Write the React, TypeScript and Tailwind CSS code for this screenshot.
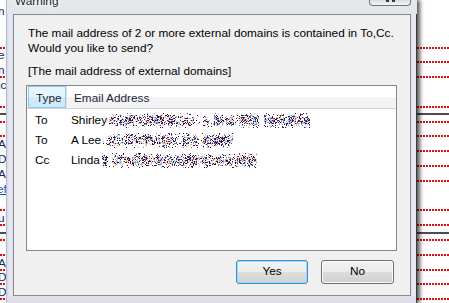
import React from "react";

function rng(seed: number) {
  let a = seed;
  return () => {
    a |= 0;
    a = (a + 0x6d2b79f5) | 0;
    let t = Math.imul(a ^ (a >>> 15), 1 | a);
    t = (t + Math.imul(t ^ (t >>> 7), 61 | t)) ^ t;
    return ((t ^ (t >>> 14)) >>> 0) / 4294967296;
  };
}

const COLORS = [
  "#4a1036",
  "#2a1a70",
  "#6a1a2a",
  "#1c1c3c",
  "#3d8fe0",
  "#7fcfff",
  "#ffa64d",
  "#f6c98a",
  "#b9a0d0",
  "#8bb8e8",
  "#5b2b6e",
  "#c9c9d9",
  "#3a1030",
];

function Noise({ w, seed }: { w: number; seed: number }) {
  const rects = React.useMemo(() => {
    const r = rng(seed);
    const out: { x: number; y: number; c: string }[] = [];
    const h = 15;
    let cf = 1;
    for (let x = 0; x < w; x++) {
      if (x % 5 === 0) cf = r() < 0.1 ? 0.2 : 0.7 + r() * 0.6;
      for (let y = 0; y < h; y++) {
        const rowF = y < 2 || y > 12 ? 0.14 : y < 4 || y > 10 ? 0.4 : 0.68;
        if (r() < rowF * cf * 0.85) {
          out.push({ x, y, c: COLORS[Math.floor(r() * COLORS.length)] });
        }
      }
    }
    return out;
  }, [w, seed]);
  return (
    <svg width={w} height={15} className="block shrink-0" shapeRendering="crispEdges">
      {rects.map((p, i) => (
        <rect key={i} x={p.x} y={p.y} width={1} height={1} fill={p.c} />
      ))}
    </svg>
  );
}

type BgRow = {
  h: number;
  text?: string;
  blue?: boolean;
  left?: boolean;
  right?: boolean;
  rule?: number;
};

const ROWS: BgRow[] = [
  { h: 19, text: "n" },
  { h: 15 },
  { h: 15, left: true, right: true },
  { h: 14, text: "e", right: true },
  { h: 15, text: "n", left: true, right: true },
  { h: 15, text: "ic" },
  { h: 15, left: true, right: true },
  { h: 15, rule: 5, left: true, right: true },
  { h: 14, left: true, right: true },
  { h: 15, text: "AD", right: true },
  { h: 15, text: "D", right: true },
  { h: 15, text: "AD", right: true },
  { h: 15, text: "ef", blue: true },
  { h: 14, left: true, right: true },
  { h: 15, text: "u", left: true, right: true },
  { h: 15, rule: 6, left: true, right: true },
  { h: 15, left: true, right: true },
  { h: 15, text: "AD", left: true, right: true },
  { h: 14, text: "D", left: true, right: true },
  { h: 15, text: "D", left: true, right: true },
  { h: 15 },
];

function Squiggle() {
  return (
    <div className="h-[2px] w-full bg-[repeating-linear-gradient(90deg,#e01010_0px,#e01010_2px,transparent_2px,transparent_3px)]" />
  );
}

function Backdrop() {
  return (
    <div className="flex flex-col">
      {ROWS.map((r, i) => (
        <div key={i} className="relative flex" style={{ height: r.h }}>
          {r.rule !== undefined && (
            <div className="absolute left-0 right-0 h-[2px] bg-[#4d4d4d]" style={{ top: r.rule }} />
          )}
          <div className="w-[20px] flex flex-col justify-end">
            {r.text && (
              <div
                className={
                  r.blue
                    ? "ml-[-3px] leading-[12px] text-[#1f4fbf] underline"
                    : "ml-[-2px] leading-[12px] text-[#1a2560]"
                }
              >
                {r.text}
              </div>
            )}
            <div className="h-[2px]">{r.left && <Squiggle />}</div>
          </div>
          <div className="flex-1" />
          <div className="w-[32px] flex flex-col justify-end">
            <div className="h-[2px]">{r.right && <Squiggle />}</div>
          </div>
        </div>
      ))}
    </div>
  );
}

function ListRow({ type, name, w, seed }: { type: string; name: string; w: number; seed: number }) {
  return (
    <div className="flex h-[20px] items-center leading-[20px] text-black">
      <span className="w-[38px] pl-[8px] shrink-0">{type}</span>
      <span className="pl-[6px] shrink-0">{name}</span>
      <span className="ml-[2px]">
        <Noise w={w} seed={seed} />
      </span>
    </div>
  );
}

export default function App() {
  return (
    <div className="relative w-[449px] h-[303px] overflow-hidden bg-white font-['Liberation_Sans',Arial,sans-serif] text-[11.8px]">
      <Backdrop />

      {/* dialog window */}
      <div className="absolute left-[6px] top-0 w-[411px] h-[303px] flex flex-col bg-[#e1e5eb] shadow-[3px_0_4px_rgba(0,0,0,0.65)]">
        {/* title bar */}
        <div className="h-[14px] flex items-start justify-between bg-[linear-gradient(180deg,#e6e8eb,#e2e5ea)] border-l border-[#b4bcc8]">
          <span className="ml-[8px] mt-[-4px] leading-none text-[#1e1e1e] [text-shadow:0_0_5px_#ffffff,0_0_3px_#ffffff]">
            Warning
          </span>
          <div className="mr-[6px] w-[42px] h-[6px] rounded-b-[4px] border border-t-0 border-[#6f7378] bg-[linear-gradient(180deg,#d9dbdf,#f4f5f7)] flex justify-center">
            <div className="w-[9px] h-[2px] flex justify-between">
              <div className="w-[3px] h-[2px] bg-[#3a3a3a]" />
              <div className="w-[3px] h-[2px] bg-[#3a3a3a]" />
            </div>
          </div>
        </div>

        {/* middle */}
        <div className="flex h-[282px]">
          <div className="w-[7px] border-l border-[#b4bcc8] bg-[linear-gradient(90deg,#d3d9e3,#e4ecf7_40%,#ece3ef_75%,#dcdfe8)]" />
          <div className="w-[398px] h-full border border-[#878c94] bg-[#f0f0f0] flex flex-col">
            <div className="pl-[14px] pt-[11px] leading-[15px] text-black">
              <p>The mail address of 2 or more external domains is contained in To,Cc.</p>
              <p>Would you like to send?</p>
              <p className="mt-[8px]">[The mail address of external domains]</p>
            </div>

            {/* list view */}
            <div className="ml-[12px] mt-[6px] w-[371px] h-[166px] border border-[#828790] bg-white flex flex-col">
              <div className="h-[23px] flex border-b border-[#d5d5d5] bg-[linear-gradient(180deg,#ffffff_0%,#ffffff_50%,#f2f3f5_50%,#f2f3f5_100%)] leading-[22px] text-[#1e2535]">
                <div className="w-[38px] shrink-0 pl-[7px] ml-[1px] border border-[#93c9e6] bg-[linear-gradient(180deg,#e8f6fe_0%,#e3f4fd_50%,#d2ecfb_50%,#cbe8fa_100%)]">
                  <span className="block leading-[20px] pt-[1px]">Type</span>
                </div>
                <div className="pl-[7px] border-l border-[#e3e4e6]">
                  <span className="block leading-[22px] pt-[1px]">Email Address</span>
                </div>
              </div>
              <div className="pt-[1px] flex flex-col">
                <ListRow type="To" name="Shirley" w={201} seed={11} />
                <ListRow type="To" name="A Lee" w={130} seed={23} />
                <ListRow type="Cc" name="Linda" w={155} seed={37} />
              </div>
            </div>

            {/* buttons */}
            <div className="mt-[9px] flex justify-end gap-[13px] pr-[16px]">
              <button className="w-[72px] h-[24px] rounded-[3px] border border-[#3c8fd0] shadow-[inset_0_0_0_1px_#98dcf8] bg-[linear-gradient(180deg,#f4f4f4_0%,#ececec_50%,#dedede_50%,#d2d2d2_100%)] text-black leading-none">
                Yes
              </button>
              <button className="w-[73px] h-[24px] rounded-[3px] border border-[#707070] shadow-[inset_0_0_0_1px_#fbfbfb] bg-[linear-gradient(180deg,#f2f2f2_0%,#ebebeb_50%,#dddddd_50%,#cfcfcf_100%)] text-black leading-none">
                No
              </button>
            </div>
          </div>
          <div className="w-[6px] bg-[linear-gradient(90deg,#dde2ea,#e6ecf6_50%,#e9e1ec)] border-r border-[#3a3a3a]" />
        </div>

        {/* bottom frame */}
        <div className="h-[7px] border-l border-r border-[#b4bcc8] border-r-[#3a3a3a] bg-[linear-gradient(180deg,#e3e0ea,#dcdde6)]" />
      </div>
    </div>
  );
}
